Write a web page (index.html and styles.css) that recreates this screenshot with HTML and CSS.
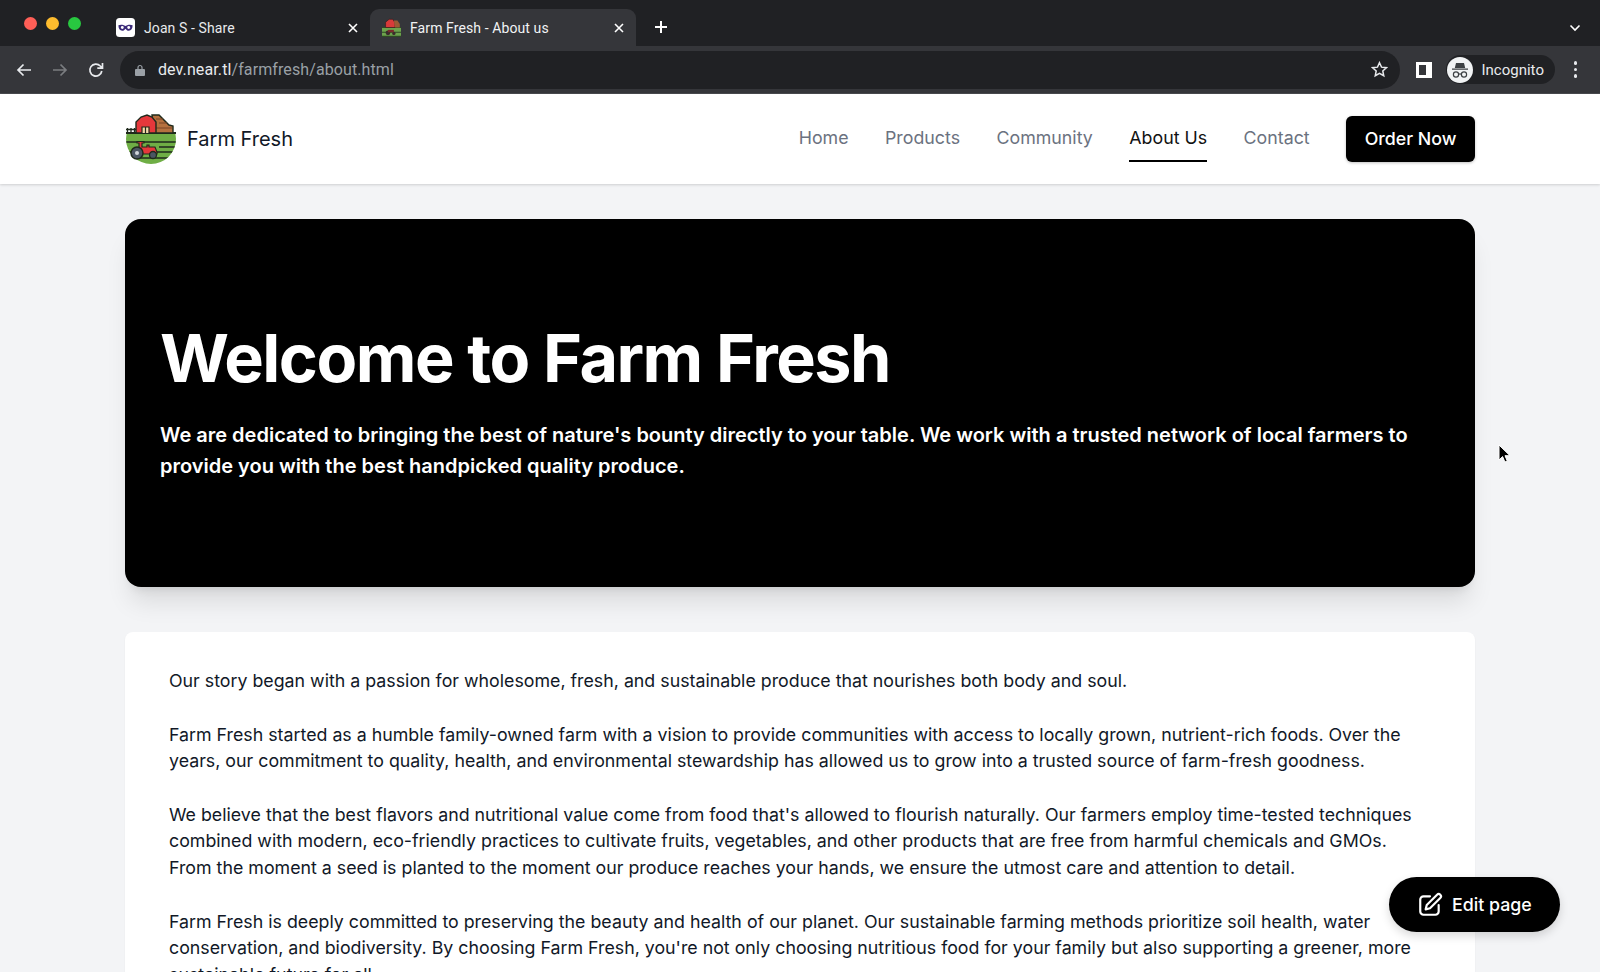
FILE: index.html
```html
<!DOCTYPE html>
<html lang="en">
<head>
    <meta charset="UTF-8">
    <meta name="viewport" content="width=device-width, initial-scale=1.0">
    <title>Farm Fresh - About us</title>
    <link rel="stylesheet" href="styles.css">
</head>
<body>
    <div class="window">
        <header class="chrome">
            <div class="tabstrip">
                <div class="lights">
                    <span class="light red"></span>
                    <span class="light yellow"></span>
                    <span class="light green"></span>
                </div>
                <div class="tab">
                    <svg class="favicon" viewBox="0 0 16 16">
                        <rect width="16" height="16" rx="3" fill="#fff"/>
                        <path d="M2 6.200c2-1 3.800-.6 6 .6 2.200-1.200 4-1.600 6-.6 0 3-1.300 4.600-3.200 4.600-1.300 0-2-1-2.800-1.800-.8.8-1.500 1.800-2.800 1.800C3.300 10.800 2 9.200 2 6.200z" fill="#3b2a78"/>
                        <circle cx="5.300" cy="8" r="1.200" fill="#fff"/>
                        <circle cx="10.700" cy="8" r="1.200" fill="#fff"/>
                    </svg>
                    <span class="tab-title">Joan S - Share</span>
                    <svg class="tab-close" viewBox="0 0 10 10"><path d="M1 1l8 8M9 1l-8 8"/></svg>
                </div>
                <div class="tab active">
                    <svg class="favicon" viewBox="0 0 16 16">
                        <path d="M0 8h16v8H0z" fill="#6da34d"/>
                        <path d="M0 8h16M0 12h16M0 15.500h16" stroke="#2f4a24" stroke-width="1"/>
                        <path d="M3 8V3.500L6 1h3l2 3v4z" fill="#d93a3a" stroke="#3a2020" stroke-width=".6"/>
                        <path d="M10 2h3l2 3v3h-4z" fill="#9a5a34"/>
                        <circle cx="5" cy="12.500" r="2" fill="#3a2b2b"/>
                        <circle cx="10" cy="13" r="1.400" fill="#3a2b2b"/>
                        <path d="M5 10h5v2H5z" fill="#7a2b2b"/>
                    </svg>
                    <span class="tab-title">Farm Fresh - About us</span>
                    <svg class="tab-close" viewBox="0 0 10 10"><path d="M1 1l8 8M9 1l-8 8"/></svg>
                </div>
                <svg class="new-tab" viewBox="0 0 14 14"><path d="M7 1v12M1 7h12"/></svg>
                <svg class="tab-search" viewBox="0 0 12 8"><path d="M1.500 1.500L6 6l4.500-4.500"/></svg>
            </div>
            <div class="toolbar">
                <svg class="tool" viewBox="0 0 16 16"><path d="M15 8H1.500M7.500 2.500L2 8l5.500 5.500"/></svg>
                <svg class="tool dim" viewBox="0 0 16 16"><path d="M1 8h13.500M8.500 2.500L14 8l-5.500 5.500"/></svg>
                <svg class="tool" viewBox="0 0 16 16"><path d="M13.800 9a6 6 0 1 1-1.500-5L14.500 6.200M14.500 1v5.200H9.300"/></svg>
                <div class="omnibox">
                    <svg class="lock" viewBox="0 0 10 12"><path d="M3 5V3.500a2 2 0 0 1 4 0V5" fill="none" stroke="#9aa0a6" stroke-width="1.200"/><rect x="0" y="5" width="10" height="7" rx="1" fill="#9aa0a6"/></svg>
                    <span class="url"><span class="host">dev.near.tl</span>/farmfresh/about.html</span>
                    <svg class="star" viewBox="0 0 16 16"><path d="M8 1.600l1.900 4.200 4.600.5-3.400 3.100.9 4.500L8 11.600l-4 2.300.9-4.500L1.500 6.300l4.600-.5z"/></svg>
                </div>
                <svg class="side-panel" viewBox="0 0 16 16"><path fill-rule="evenodd" d="M0 0h16v16H0zM3 3v10h7V3z" fill="#fff"/></svg>
                <div class="profile">
                    <svg class="avatar" viewBox="0 0 26 26">
                        <circle cx="13" cy="13" r="13" fill="#f1f3f4"/>
                        <path d="M9 6h8l1.200 5H7.800zM5 11.500h16v1.300H5z" fill="#3c4043"/>
                        <circle cx="9" cy="17.500" r="2.600" fill="none" stroke="#3c4043" stroke-width="1.200"/>
                        <circle cx="17" cy="17.500" r="2.600" fill="none" stroke="#3c4043" stroke-width="1.200"/>
                        <path d="M11.600 17h2.800" stroke="#3c4043" stroke-width="1.200"/>
                    </svg>
                    <span>Incognito</span>
                </div>
                <div class="kebab"><span></span><span></span><span></span></div>
            </div>
        </header>

        <nav class="navbar">
            <div class="brand">
                <svg class="logo" viewBox="0 0 50 50">
                    <clipPath id="logo-clip"><circle cx="25" cy="25" r="25"/></clipPath>
                    <g clip-path="url(#logo-clip)">
                        <rect x="0" y="19" width="50" height="31" fill="#6fae45"/>
                        <path d="M0 28h50M33 33h17M0 38h50M0 44h50" stroke="#1f2a1c" stroke-width="1.600"/>
                    </g>
                    <path d="M0 19h50" stroke="#1f2a1c" stroke-width="2"/>
                    <path d="M1.500 19v-5M5 19v-5M8.500 19v-5M0 15.500h10" stroke="#1f2a1c" stroke-width="1.300"/>
                    <path d="M26 1h7l10 10 4 1v7H28z" fill="#b5713f" stroke="#1f2a1c" stroke-width="1.400"/>
                    <path d="M30 5h7M33 9h8M29 14h17" stroke="#7a4526" stroke-width="1.200"/>
                    <path d="M10 19V8l5-5 6-2 5 2 4 5v11z" fill="#e5383b" stroke="#1f2a1c" stroke-width="1.400"/>
                    <path d="M16 19v-6h7v6M19.500 13v6" fill="#f5d9a8" stroke="#1f2a1c" stroke-width="1.200"/>
                    <path d="M13 36v-7h-2v-1.500h7V29h-2v4h5v-2h2v2h6l2 5v2H14z" fill="#e5383b" stroke="#1f2a1c" stroke-width="1.200"/>
                    <circle cx="11" cy="39" r="6" fill="#4b5563" stroke="#1f2a1c" stroke-width="1.500"/>
                    <circle cx="11" cy="39" r="2" fill="#d1d5db"/>
                    <circle cx="27" cy="41" r="3.500" fill="#4b5563" stroke="#1f2a1c" stroke-width="1.300"/>
                </svg>
                <span class="brand-name">Farm Fresh</span>
            </div>
            <div class="nav-links">
                <a class="nav-link">Home</a>
                <a class="nav-link">Products</a>
                <a class="nav-link">Community</a>
                <a class="nav-link current">About Us</a>
                <a class="nav-link">Contact</a>
                <a class="order-btn">Order Now</a>
            </div>
        </nav>

        <main class="content">
            <section class="hero">
                <h1>Welcome to Farm Fresh</h1>
                <p>We are dedicated to bringing the best of nature's bounty directly to your table. We work with a trusted network of local farmers to provide you with the best handpicked quality produce.</p>
            </section>
            <section class="story">
                <p>Our story began with a passion for wholesome, fresh, and sustainable produce that nourishes both body and soul.</p>
                <p>Farm Fresh started as a humble family-owned farm with a vision to provide communities with access to locally grown, nutrient-rich foods. Over the years, our commitment to quality, health, and environmental stewardship has allowed us to grow into a trusted source of farm-fresh goodness.</p>
                <p>We believe that the best flavors and nutritional value come from food that's allowed to flourish naturally. Our farmers employ time-tested techniques combined with modern, eco-friendly practices to cultivate fruits, vegetables, and other products that are free from harmful chemicals and GMOs. From the moment a seed is planted to the moment our produce reaches your hands, we ensure the utmost care and attention to detail.</p>
                <p>Farm Fresh is deeply committed to preserving the beauty and health of our planet. Our sustainable farming methods prioritize soil health, water conservation, and biodiversity. By choosing Farm Fresh, you're not only choosing nutritious food for your family but also supporting a greener, more sustainable future for all.</p>
            </section>
        </main>

        <a class="edit-btn">
            <svg viewBox="0 0 24 24"><path d="M12 4H6a3 3 0 0 0-3 3v11a3 3 0 0 0 3 3h11a3 3 0 0 0 3-3v-6"/><path d="M18.500 2.500a2.100 2.100 0 0 1 3 3L12 15l-4 1 1-4z"/></svg>
            Edit page
        </a>
        <svg class="cursor" viewBox="0 0 12 20"><path d="M1 1v15l3.600-3.400 2.300 5.400 2.400-1-2.300-5.300H12z" fill="#000" stroke="#fff" stroke-width="1"/></svg>
    </div>
</body>
</html>
```

FILE: styles.css
```css
* {
    box-sizing: border-box;
}

html, body {
    margin: 0;
    padding: 0;
    height: 100%;
}

body {
    font-family: Inter, "Liberation Sans", sans-serif;
    background-color: #f3f4f6;
    color: #111827;
    overflow: hidden;
}

.window {
    position: relative;
    height: 972px;
    overflow: hidden;
}

/* browser chrome */
.chrome {
    background-color: #202124;
    color: #fff;
}

.tabstrip {
    display: flex;
    align-items: flex-end;
    height: 46px;
    padding-left: 24px;
    position: relative;
}

.lights {
    display: flex;
    gap: 9px;
    align-self: flex-start;
    margin-top: 17px;
    margin-right: 23px;
}

.light {
    width: 13px;
    height: 13px;
    border-radius: 50%;
}

.red { background-color: #ff5f57; }
.yellow { background-color: #febc2e; }
.green { background-color: #28c840; }

.tab {
    display: flex;
    align-items: center;
    width: 266px;
    height: 37px;
    padding: 0 12px 0 12px;
    border-radius: 9px 9px 0 0;
    font-size: 14px;
    letter-spacing: 0.1px;
    font-family: Roboto, sans-serif;
    color: #e8eaed;
}

.tab.active {
    background-color: #35363a;
    color: #f1f3f4;
}

.favicon {
    width: 19px;
    height: 19px;
    margin-right: 9px;
    flex: none;
}

.tab-title {
    flex: 1;
    white-space: nowrap;
}

.tab-close {
    width: 10px;
    height: 10px;
    fill: none;
    stroke: #fff;
    stroke-width: 1.600;
}

.new-tab {
    width: 14px;
    height: 14px;
    margin: 0 0 12px 18px;
    fill: none;
    stroke: #fff;
    stroke-width: 2;
}

.tab-search {
    position: absolute;
    right: 19px;
    top: 24px;
    width: 12px;
    height: 8px;
    fill: none;
    stroke: #fff;
    stroke-width: 1.600;
}

.toolbar {
    display: flex;
    align-items: center;
    height: 48px;
    padding: 0 23px 0 16px;
    background-color: #35363a;
    border-bottom: 1px solid #4a4b4f;
}

.tool {
    width: 16px;
    height: 16px;
    margin-right: 20px;
    flex: none;
    fill: none;
    stroke: #e8eaed;
    stroke-width: 1.700;
}

.tool.dim {
    stroke: #7b7d80;
}

.omnibox {
    display: flex;
    align-items: center;
    flex: 1;
    height: 38px;
    margin-left: -4px;
    padding: 0 12px 0 15px;
    background-color: #202124;
    border-radius: 19px;
}

.lock {
    width: 10px;
    height: 12px;
    margin-right: 13px;
}

.url {
    flex: 1;
    font-family: Roboto, sans-serif;
    font-size: 16px;
    letter-spacing: 0.1px;
    color: #9aa0a6;
}

.host {
    color: #e8eaed;
}

.star {
    width: 17px;
    height: 17px;
    fill: none;
    stroke: #e8eaed;
    stroke-width: 1.400;
}

.side-panel {
    width: 16px;
    height: 16px;
    margin-left: 16px;
    flex: none;
}

.profile {
    display: flex;
    align-items: center;
    gap: 9px;
    height: 29px;
    width: 109px;
    margin-left: 14px;
    padding-left: 1px;
    background-color: #202124;
    border-radius: 15px;
    font-family: Roboto, sans-serif;
    font-size: 15px;
    color: #e8eaed;
}

.avatar {
    width: 26px;
    height: 26px;
}

.kebab {
    display: flex;
    flex-direction: column;
    gap: 3px;
    margin-left: 19px;
}

.kebab span {
    width: 3.500px;
    height: 3.500px;
    border-radius: 50%;
    background-color: #e8eaed;
}

/* site nav */
.navbar {
    display: flex;
    align-items: center;
    justify-content: space-between;
    height: 90px;
    padding: 0 125px 0 126px;
    background-color: #fff;
    box-shadow: 0 1px 3px rgba(0, 0, 0, 0.1), 0 1px 2px rgba(0, 0, 0, 0.06);
    position: relative;
}

.brand {
    display: flex;
    align-items: center;
    gap: 11px;
}

.logo {
    width: 50px;
    height: 50px;
}

.brand-name {
    font-size: 20px;
    color: #111827;
}

.nav-links {
    display: flex;
    align-items: center;
    gap: 36.500px;
}

.nav-link {
    padding: 9px 0 10px;
    font-size: 17.800px;
    line-height: 24px;
    color: #6b7280;
    border-bottom: 2px solid transparent;
}

.nav-link.current {
    color: #111;
    border-bottom-color: #000;
}

.order-btn {
    padding: 11px 18.500px;
    font-size: 17.800px;
    font-weight: 500;
    line-height: 24px;
    color: #fff;
    background-color: #000;
    border-radius: 6px;
    box-shadow: 0 1px 3px rgba(0, 0, 0, 0.25);
}

/* page body */
.content {
    display: flex;
    flex-direction: column;
    gap: 45px;
    padding: 35px 125px 0;
}

.hero {
    display: flex;
    flex-direction: column;
    justify-content: center;
    height: 368px;
    padding: 0 35px 3px;
    background-color: #000;
    color: #fff;
    border-radius: 16px;
    box-shadow: 0 20px 25px -5px rgba(0, 0, 0, 0.1), 0 8px 10px -6px rgba(0, 0, 0, 0.1);
}

.hero h1 {
    margin: 0 0 26px;
    font-size: 66.500px;
    font-weight: 700;
    line-height: 72px;
    letter-spacing: -1.500px;
}

.hero p {
    margin: 0;
    font-size: 20px;
    font-weight: 600;
    line-height: 31px;
}

.story {
    padding: 36px 44px;
    background-color: #fff;
    border-radius: 8px;
    box-shadow: 0 1px 2px rgba(0, 0, 0, 0.05);
}

.story p {
    margin: 0 0 27px;
    font-size: 17.800px;
    line-height: 26.600px;
    color: #111827;
}

.edit-btn {
    position: absolute;
    left: 1389px;
    top: 877px;
    display: flex;
    align-items: center;
    gap: 9px;
    width: 171px;
    height: 55px;
    padding-left: 28px;
    font-size: 17.800px;
    font-weight: 500;
    color: #fff;
    background-color: #000;
    border-radius: 28px;
    box-shadow: 0 4px 10px rgba(0, 0, 0, 0.15);
}

.edit-btn svg {
    width: 26px;
    height: 26px;
    fill: none;
    stroke: #fff;
    stroke-width: 2;
    stroke-linecap: round;
    stroke-linejoin: round;
}

.cursor {
    position: absolute;
    left: 1498px;
    top: 444px;
    width: 12px;
    height: 20px;
}
```
